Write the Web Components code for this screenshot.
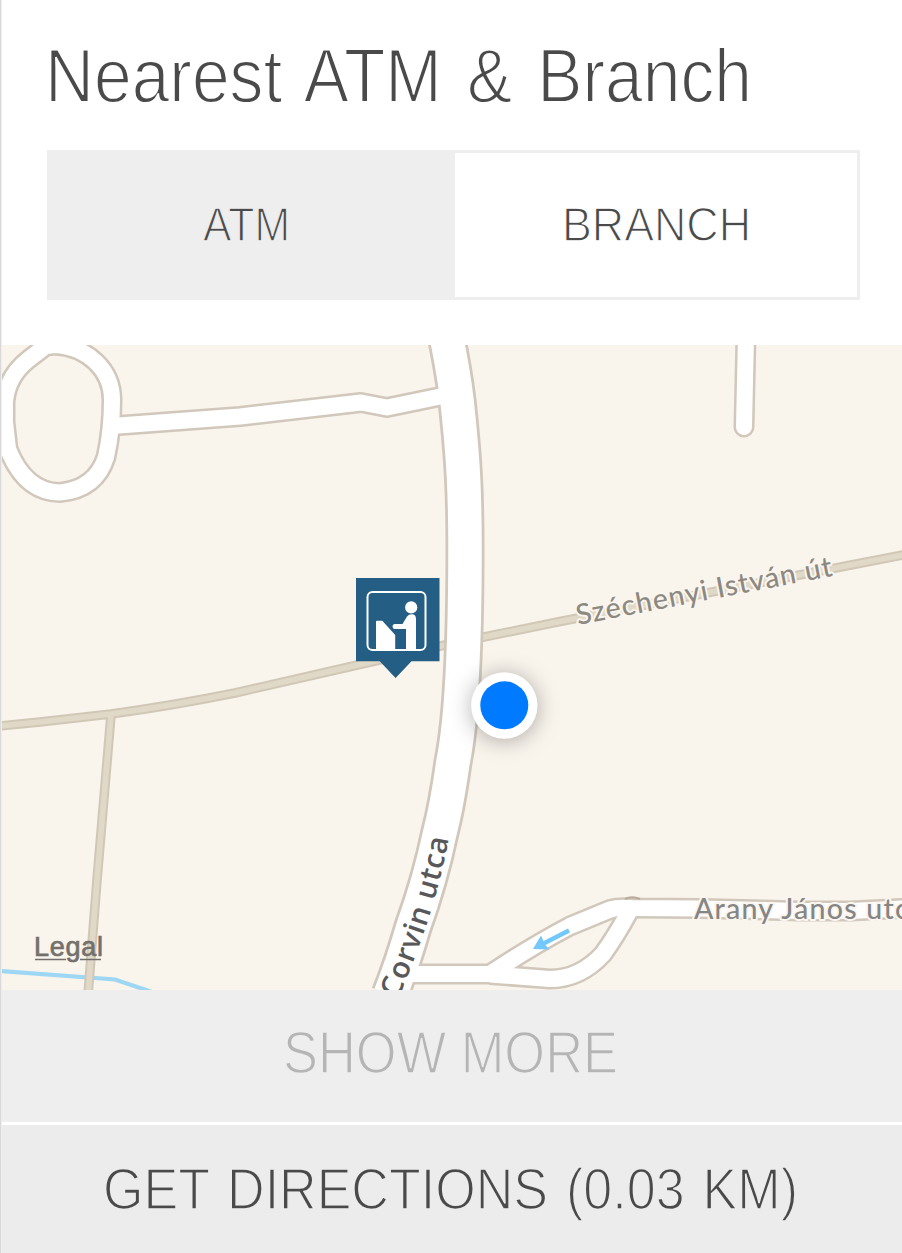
<!DOCTYPE html>
<html lang="en">
<head>
<meta charset="utf-8">
<title>Nearest ATM &amp; Branch</title>
<style>
body{margin:0;background:#fff;font-family:"Liberation Sans",Arial,sans-serif;color:#4a4a4a}
</style>
</head>
<body>
<atm-card>
  <thin-label slot="title" size="75.5" length="707" thin="1.8" gap="7">Nearest ATM &amp; Branch</thin-label>
  <tab-bar slot="tabs">
    <tab-item active><thin-label size="48" length="87" thin="1.3" bg="#eeeeee">ATM</thin-label></tab-item>
    <tab-item><thin-label size="48" length="189" thin="1.3">BRANCH</thin-label></tab-item>
  </tab-bar>
  <street-map slot="map"></street-map>
  <action-row slot="actions" style="color:#b5b5b5"><thin-label size="58.5" length="335" thin="1.5" bg="#eeeeee">SHOW MORE</thin-label></action-row>
  <action-row slot="actions" class="main"><thin-label size="58" length="695" thin="1.6" bg="#ececec" gap="4" digits="6">GET DIRECTIONS (0.03 KM)</thin-label></action-row>
</atm-card>
<script>
class Base extends HTMLElement {
  constructor() {
    super();
    this.attachShadow({ mode: 'open' });
    this.shadowRoot.innerHTML = this.constructor.markup || '';
  }
}

/* Light-weight label: the outline in the background colour slims the strokes. */
class ThinLabel extends HTMLElement {
  connectedCallback() {
    const size = +this.getAttribute('size'), length = +this.getAttribute('length');
    const root = this.attachShadow({ mode: 'open' });
    root.innerHTML = `<style>
      :host{display:block;line-height:0}
      svg{display:block;overflow:visible}
      text{font-family:"Liberation Sans",Arial,sans-serif;fill:currentColor;stroke-linejoin:miter;word-spacing:${this.getAttribute('gap') || 0}px}
    </style><svg width="${length}" height="${size}"><text y="${size * 0.845}" font-size="${size}"
      textLength="${length}" lengthAdjust="spacingAndGlyphs" stroke="${this.getAttribute('bg') || '#ffffff'}"
      stroke-width="${this.getAttribute('thin')}"></text></svg>`;
    root.querySelector('text').textContent = this.textContent;
  }
}
customElements.define('thin-label', ThinLabel);

customElements.define('tab-item', class extends Base {
  static markup = `<style>
    :host{display:flex;flex:1;align-items:center;justify-content:center;box-sizing:border-box;padding-bottom:2px}
    :host([active]){background:#eee;flex:0 0 405px;padding-right:12px}
    slot{display:block}
  </style><slot></slot>`;
});

customElements.define('tab-bar', class extends Base {
  static markup = `<style>
    :host{display:flex;box-sizing:border-box;width:813px;height:150px;border:3px solid #eee}
  </style><slot></slot>`;
});

customElements.define('action-row', class extends Base {
  static markup = `<style>
    :host{display:flex;box-sizing:border-box;height:132px;background:#eee;align-items:center;justify-content:center;padding:0 4px 5px 0}
    :host(.main){height:131px;background:#ececec;border-top:3px solid #fff;padding:0 4px 1px 0}
  </style><slot></slot>`;
});

customElements.define('street-map', class extends Base {
  static markup = `<style>
    :host{display:block;height:645px;overflow:hidden}
    svg{display:block}
    .r{fill:none;stroke-linejoin:round}
    .case{stroke:#d1c7bb}
    .white{stroke:#fff}
    .halo{paint-order:stroke;stroke:#faf6ef;stroke-width:4px;stroke-linejoin:round}
  </style>
  <svg width="902" height="645" viewBox="0 345 902 645">
    <defs>
      <path id="main" d="M446,335 L448,345 Q456,385 459,420 C463,460 465,490 465,550 C465,650 461,722 453,762 Q447,805 440,832 Q430,880 413,927 Q402,965 390,995"/>
      <path id="lane" d="M112,426 L240,416.500 L361,402.500 L387,407.500 L450,394.500"/>
      <path id="loop" d="M46,346 L29,359 Q7,376 5,402 V422 L8,449 Q25,492 60,492.500 Q96,489 106,457 Q112,430 112,400 C112,370 88,347 55,345 Z"/>
      <path id="stub" d="M746,335 L744,427"/>
      <path id="tan" d="M-5,726.500 L40,722 L111,714 Q170,706 235,693 L375,661 L445,645 L560,621.500 L910,553.500"/>
      <path id="tan2" d="M111,715 Q104,800 97,880 L88,995"/>
      <path id="arany" d="M395,974 H490 Q532,946 570,926 L610,909.500 Q618,907 632,908 L700,908.500 L800,911 H850 L910,908"/>
      <path id="curve" d="M490,974.500 L550,979 Q580,979 603,954 Q616,936 629,912"/>
      <path id="corvin" d="M388,1022 C413,965 438,905 451,825"/>
    </defs>
    <rect y="345" width="902" height="645" fill="#f9f4ec"/>
    <path d="M0,971 L115,979.500 L152,992" fill="none" stroke="#9dd7f4" stroke-width="4.200"/>
    <g class="r" stroke="#d1c7b6" stroke-width="9.600"><use href="#tan2"/><use href="#tan"/></g>
    <g class="r" stroke="#e1d9c7" stroke-width="5.600"><use href="#tan2"/><use href="#tan"/></g>
    <g class="r case">
      <g stroke-width="21"><use href="#lane"/><use href="#loop"/><use href="#stub" stroke-linecap="round"/><use href="#arany"/><use href="#curve"/></g>
      <use href="#main" stroke-width="39"/>
    </g>
    <g class="r white">
      <g stroke-width="16"><use href="#lane"/><use href="#loop"/><use href="#stub" stroke-linecap="round"/><use href="#arany"/><use href="#curve"/></g>
      <use href="#main" stroke-width="33.500"/>
    </g>
    <path d="M625,899 Q632,895.500 640,899" fill="none" stroke="#b9aa9c" stroke-width="2"/>
    <path d="M570,932.500 L568,928.500 L543.500,941 L541,935.500 L533,949 L549.500,949.500 L545.500,945 Z" fill="#72c8fb"/>

    <text class="halo" transform="translate(578 625) rotate(-10.900)" font-family="Lato, sans-serif" font-size="28.500" fill="#8d8981" font-weight="500" textLength="260">Széchenyi István út</text>
    <text class="halo" x="694" y="918.500" font-family="Lato, sans-serif" font-size="28.500" fill="#858585" font-weight="500" textLength="230">Arany János utca</text>
    <text font-family="'Open Sans', sans-serif" font-size="29.500" font-weight="600" fill="#58585a"><textPath href="#corvin" startOffset="25" textLength="169">Corvin utca</textPath></text>
    <text x="34" y="955.500" font-family="'Liberation Sans', Arial, sans-serif" font-size="27" fill="#73706b" stroke="#73706b" stroke-width=".7" textLength="69">Legal</text>
    <path d="M35,959.500 H66 M80,959.500 H101" stroke="#73706b" stroke-width="1.300"/>

    <path d="M356,578 H439.500 V661.300 H411.500 L395.600,678 L379.700,661.300 H356 Z" fill="#255e84"/>
    <rect x="367.500" y="592" width="58" height="58" rx="5" fill="none" stroke="#fff" stroke-width="2"/>
    <circle cx="411.200" cy="607.400" r="6.100" fill="#fff"/>
    <path d="M376,621.500 Q376,620.700 377,620.700 H382.300 L395.200,635 V650 H376 Z" fill="#fff"/>
    <path d="M394.500,624 H402.500 L407,616.500 Q408.500,614.300 412,614.300 Q416,614.500 416,619 V650 H406 V629 H394.500 Q392.500,628.500 392.500,626.500 Q392.500,624.300 394.500,624 Z" fill="#fff"/>

    <circle cx="504.300" cy="705.500" r="33.200" fill="#fff" style="filter:drop-shadow(0 2px 11px rgba(0,0,0,.3))"/>
    <circle cx="504.300" cy="705.300" r="24" fill="#007aff"/>
  </svg>`;
});

customElements.define('atm-card', class extends Base {
  static markup = `<style>
    :host{display:grid;grid-template-rows:345px 645px auto;box-sizing:border-box;width:902px;height:1253px;overflow:hidden;background:linear-gradient(90deg,#d9d9db 0 1px,#eeeef0 1px 2px,#fff 2px)}
    header{display:flex;flex-direction:column;padding:38px 0 0 45px}
    .tabs{padding:36.500px 0 0 2px}
    .map{overflow:hidden;margin-left:2px}
    .map slot{display:block;margin-left:-2px}
    .actions{margin-left:2px}
  </style>
  <header><slot name="title"></slot><div class="tabs"><slot name="tabs"></slot></div></header>
  <div class="map"><slot name="map"></slot></div>
  <div class="actions"><slot name="actions"></slot></div>`;
});
</script>
</body>
</html>
